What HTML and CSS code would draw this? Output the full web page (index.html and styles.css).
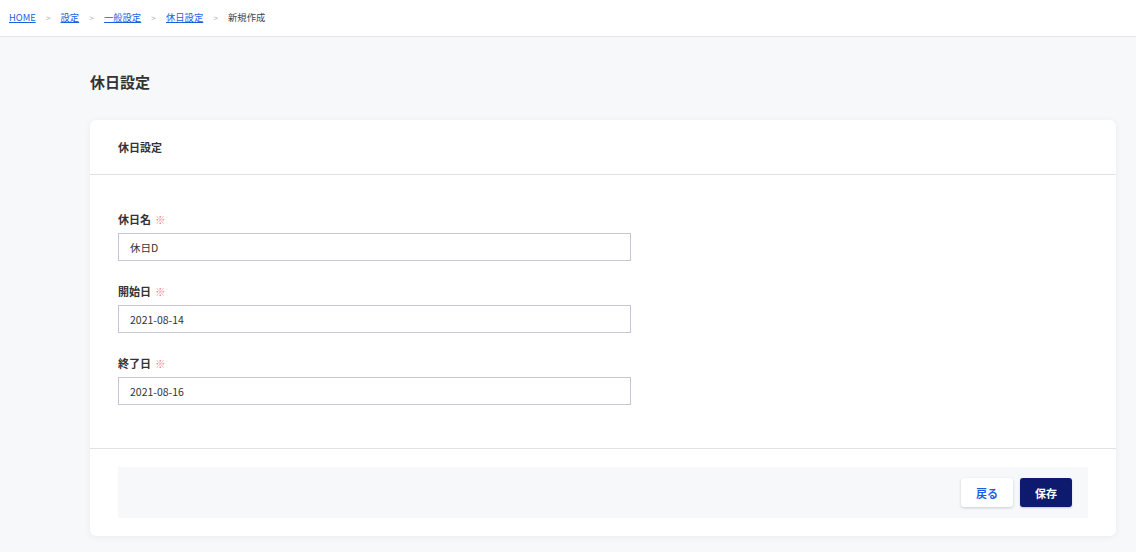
FILE: index.html
```html
<!DOCTYPE html>
<html lang="ja">
<head>
<meta charset="utf-8">
<link rel="stylesheet" href="styles.css">
</head>
<body>
<header class="topbar">
  <nav class="crumbs">
    <a href="#">HOME</a><span class="sep">&gt;</span>
    <a href="#">設定</a><span class="sep">&gt;</span>
    <a href="#">一般設定</a><span class="sep">&gt;</span>
    <a href="#">休日設定</a><span class="sep">&gt;</span>
    <span class="current">新規作成</span>
  </nav>
</header>
<main class="main">
  <h1 class="page-title">休日設定</h1>
  <section class="card">
    <div class="card-head">休日設定</div>
    <div class="card-body">
      <div class="field">
        <label class="label">休日名 <span class="req">※</span></label>
        <input class="input" type="text" value="休日D">
      </div>
      <div class="field">
        <label class="label">開始日 <span class="req">※</span></label>
        <input class="input" type="text" value="2021-08-14">
      </div>
      <div class="field">
        <label class="label">終了日 <span class="req">※</span></label>
        <input class="input" type="text" value="2021-08-16">
      </div>
    </div>
    <div class="card-foot">
      <div class="actions">
        <button class="btn btn-back">戻る</button>
        <button class="btn btn-save">保存</button>
      </div>
    </div>
  </section>
</main>
</body>
</html>
```
FILE: styles.css
```css
* { box-sizing: border-box; }
html, body {
  margin: 0;
  padding: 0;
  background: #f7f8fa;
  font-family: "Noto Sans CJK JP", "Noto Sans", sans-serif;
  color: #333;
}
.topbar {
  height: 37px;
  background: #fff;
  border-bottom: 1px solid #e3e5ea;
  display: flex;
  align-items: center;
  padding-left: 9px;
}
.crumbs {
  display: flex;
  align-items: center;
  font-size: 9.3px;
  line-height: 1;
}
.crumbs a {
  color: #1a5fe0;
  text-decoration: underline;
}
.crumbs .sep {
  color: #aaa;
  margin: 0 10.2px;
  font-size: 8px;
}
.crumbs .current { color: #444; }
.main {
  padding: 0 20px 16px 90px;
}
.page-title {
  margin: 0;
  padding-top: 34px;
  height: 83px;
  font-size: 15px;
  font-weight: 700;
  line-height: 22px;
  color: #333;
}
.card {
  width: 1026px;
  background: #fff;
  border-radius: 6px;
  box-shadow: 0 1px 6px rgba(0, 0, 0, 0.06);
}
.card-head {
  height: 55px;
  padding-left: 28px;
  display: flex;
  align-items: center;
  font-size: 11px;
  font-weight: 700;
  color: #333;
  border-bottom: 1px solid #e2e2e4;
}
.card-body {
  padding: 35px 28px 22px;
  border-bottom: 1px solid #e2e2e4;
}
.field { margin-bottom: 21px; }
.label {
  display: flex;
  align-items: center;
  height: 18px;
  margin-bottom: 5px;
  font-size: 11px;
  font-weight: 700;
  color: #333;
}
.req {
  color: #f07878;
  font-weight: 400;
  margin-left: 4px;
  font-size: 10.5px;
}
.input {
  display: block;
  width: 513px;
  height: 28px;
  border: 1px solid #c6c6d6;
  border-radius: 0;
  padding: 0 11px;
  font-family: inherit;
  font-size: 10.5px;
  color: #333;
  background: #fff;
  outline: none;
}
.card-foot {
  padding: 18px 28px 18px;
}
.actions {
  background: #f7f8fa;
  height: 51px;
  display: flex;
  align-items: center;
  justify-content: flex-end;
  gap: 7px;
  padding-right: 16px;
}
.btn {
  width: 52px;
  height: 29px;
  border: none;
  border-radius: 3px;
  font-family: inherit;
  font-size: 11px;
  font-weight: 700;
  cursor: pointer;
}
.btn-back {
  background: #fff;
  color: #1a5fe0;
  box-shadow: 0 1px 3px rgba(0, 0, 0, 0.18);
}
.btn-save {
  background: #0d1a6e;
  color: #fff;
  box-shadow: 0 1px 2px rgba(0, 0, 0, 0.2);
}
```
